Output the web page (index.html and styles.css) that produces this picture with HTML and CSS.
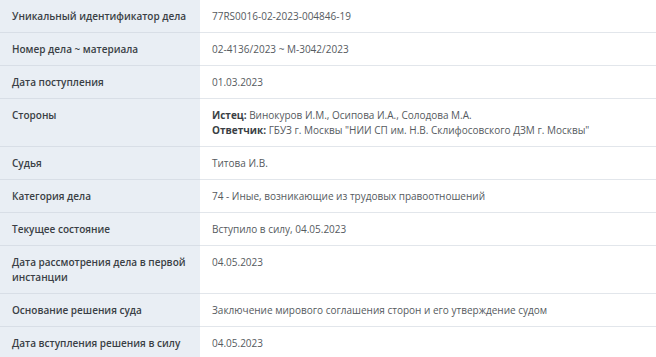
FILE: index.html
```html
<!DOCTYPE html>
<html lang="ru">
<head>
<meta charset="utf-8">
<link rel="stylesheet" href="styles.css">
</head>
<body>
<table class="card-table">
  <tbody>
    <tr><td class="label">Уникальный идентификатор дела</td><td class="value">77RS0016-02-2023-004846-19</td></tr>
    <tr><td class="label">Номер дела ~ материала</td><td class="value">02-4136/2023 ~ М-3042/2023</td></tr>
    <tr><td class="label">Дата поступления</td><td class="value">01.03.2023</td></tr>
    <tr><td class="label">Стороны</td><td class="value"><b>Истец:</b> Винокуров И.М., Осипова И.А., Солодова М.А.<br><b>Ответчик:</b> ГБУЗ г. Москвы "НИИ СП им. Н.В. Склифосовского ДЗМ г. Москвы"</td></tr>
    <tr><td class="label">Судья</td><td class="value">Титова И.В.</td></tr>
    <tr><td class="label">Категория дела</td><td class="value">74 - Иные, возникающие из трудовых правоотношений</td></tr>
    <tr><td class="label">Текущее состояние</td><td class="value">Вступило в силу, 04.05.2023</td></tr>
    <tr><td class="label">Дата рассмотрения дела в первой инстанции</td><td class="value">04.05.2023</td></tr>
    <tr><td class="label">Основание решения суда</td><td class="value">Заключение мирового соглашения сторон и его утверждение судом</td></tr>
    <tr><td class="label">Дата вступления решения в силу</td><td class="value">04.05.2023</td></tr>
  </tbody>
</table>
</body>
</html>
```
FILE: styles.css
```css
html, body {
  margin: 0;
  padding: 0;
  background: #ffffff;
}
body {
  font-family: "Open Sans", "Noto Sans", sans-serif;
  font-size: 10px;
  line-height: 15px;
}
.card-table {
  width: 656px;
  border-collapse: collapse;
}
.card-table td {
  padding: 9px 12px 8px;
  vertical-align: top;
  border-bottom: 1px solid #e2e6eb;
}
.card-table .label {
  width: 176px;
  background: #e9eef4;
  color: #3a3f45;
  font-weight: 600;
  border-bottom-color: #d8dee6;
}
.card-table .value {
  color: #555a60;
}
.card-table .value b {
  color: #3a3f45;
  font-weight: 700;
}
```
